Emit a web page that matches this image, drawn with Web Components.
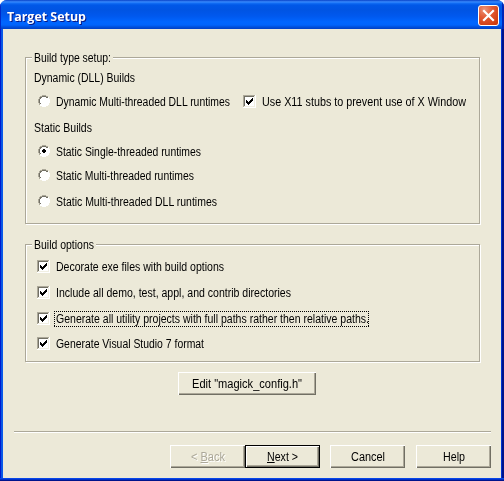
<!DOCTYPE html>
<html lang="en">
<head>
<meta charset="utf-8">
<title>Target Setup</title>
<style>
html,body{margin:0;padding:0;overflow:hidden;background:#fff}
body{font:12px/16px "Liberation Sans",Arial,sans-serif;color:#000}
.panel{display:flex;flex-direction:column;height:449px;box-sizing:border-box;padding:28px 10px 10px 11px}
.panel>xp-group{margin-left:11px}
.type{--rows:23px 27px 23px 24px 26px 16px;height:167px;--pad:12px}
.options{--rows:26px 26px 25px 16px;height:118px;--pad:13px;margin-top:20px}
.line{display:flex}
.line xp-option:first-child{width:206px}
xp-option{margin-left:12px}
.line xp-option+xp-option{margin-left:0}
.edit{margin:10px 0 0 164px}
hr{box-sizing:border-box;height:2px;width:477px;margin:36px 0 12px;border:0;border-top:1px solid #aca899;border-bottom:1px solid #fff;flex:none}
.actions{display:flex;margin-left:156px}
.actions .cancel{margin:0 11px 0 10px}
</style>
</head>
<body>
<xp-window caption="Target Setup">
  <div class="panel">
    <xp-group class="type" caption="Build type setup:" fit="77">
      <fit-text fit="101" style="margin-left:8px">Dynamic (DLL) Builds</fit-text>
      <div class="line">
        <xp-option kind="radio" fit="174">Dynamic Multi-threaded DLL runtimes</xp-option>
        <xp-option kind="check" checked fit="204">Use X11 stubs to prevent use of X Window</xp-option>
      </div>
      <fit-text fit="58" style="margin-left:8px">Static Builds</fit-text>
      <xp-option kind="radio" checked fit="145">Static Single-threaded runtimes</xp-option>
      <xp-option kind="radio" fit="138">Static Multi-threaded runtimes</xp-option>
      <xp-option kind="radio" fit="161">Static Multi-threaded DLL runtimes</xp-option>
    </xp-group>
    <xp-group class="options" caption="Build options" fit="60">
      <xp-option kind="check" checked fit="168">Decorate exe files with build options</xp-option>
      <xp-option kind="check" checked fit="235">Include all demo, test, appl, and contrib directories</xp-option>
      <xp-option kind="check" checked focused fit="313">Generate all utility projects with full paths rather then relative paths.</xp-option>
      <xp-option kind="check" checked fit="148">Generate Visual Studio 7 format</xp-option>
    </xp-group>
    <xp-button class="edit" style="--w:138px" fit="110">Edit "magick_config.h"</xp-button>
    <hr>
    <div class="actions">
      <xp-button disabled fit="34">&lt; <u>B</u>ack</xp-button>
      <xp-button primary fit="31"><u>N</u>ext &gt;</xp-button>
      <xp-button class="cancel" fit="34">Cancel</xp-button>
      <xp-button fit="22">Help</xp-button>
    </div>
  </div>
</xp-window>
<script>
// Text line condensed horizontally to a given pixel width.
class FitText extends HTMLElement{
  constructor(){
    super();
    this.attachShadow({mode:'open'}).innerHTML=`<style>
      :host{display:block;height:16px;white-space:pre}
      span{display:inline-block;transform-origin:0 50%}
    </style><span><slot></slot></span>`;
  }
  connectedCallback(){
    const w=+this.getAttribute('fit'), s=this.shadowRoot.querySelector('span');
    const natural=s.getBoundingClientRect().width;
    if(!w||!natural) return;
    this.style.width=w+'px';
    s.style.transform=`scaleX(${w/natural})`;
  }
}

class XpWindow extends HTMLElement{
  constructor(){
    super();
    this.attachShadow({mode:'open'}).innerHTML=`<style>
      :host{display:block;box-sizing:border-box;width:504px;height:481px;overflow:hidden;
        border-radius:7px 7px 0 0;
        background:linear-gradient(90deg,#0019cf 0,#0019cf 1px,#0855dd 1px,#0a5af0 3px,#0a5af0 501px,#0033d0 501px,#0033d0 502px,#00138c 502px)}
      header{display:flex;align-items:flex-start;justify-content:space-between;box-sizing:border-box;height:29px;padding:5px 5px 0 7px;
        background:linear-gradient(180deg,#0842c8 0,#3a8cff 2px,#1470f5 3px,#0058e8 5px,#0054e3 10px,#0058ee 16px,#0066ff 22px,#0064fc 25px,#0050dc 27px,#0040c4 29px);
        box-shadow:inset 1px 0 #0028c8,inset -2px 0 #0026b8}
      .cap{color:#fff;height:20px;margin-top:1px;font:bold 13px/20px "Open Sans","Noto Sans",sans-serif;text-shadow:1px 1px #0a1883}
      main{width:498px;height:449px;margin-left:3px;background:#ece9d8}
      footer{height:3px;background:linear-gradient(#0846e8 0 1px,#0030c8 1px 2px,#00138c 2px)}
      svg{display:block;flex:none}
    </style>
    <header><fit-text class="cap" fit="79">${this.getAttribute('caption')}</fit-text>
      <svg width="21" height="21" viewBox="0 0 21 21">
        <defs><radialGradient id="g" cx=".3" cy=".2" r="1"><stop offset="0" stop-color="#ec9378"/><stop offset=".4" stop-color="#e25a34"/><stop offset="1" stop-color="#c93406"/></radialGradient></defs>
        <rect x=".5" y=".5" width="20" height="20" rx="2.5" fill="url(#g)" stroke="#fff"/>
        <path d="M6 6L15 15M15 6L6 15" stroke="#fff" stroke-width="2.2" stroke-linecap="square" fill="none"/>
      </svg>
    </header><main><slot></slot></main><footer></footer>`;
  }
}

class XpGroup extends HTMLElement{
  constructor(){
    super();
    this.attachShadow({mode:'open'}).innerHTML=`<style>
      :host{display:block;position:relative;box-sizing:border-box;width:455px;flex:none;border:1px solid #aca899;
        box-shadow:1px 1px #fff,inset 1px 1px #fff}
      .legend{position:absolute;left:6px;top:-8px;padding:0 2px;background:#ece9d8}
      .body{display:grid;grid-template-rows:var(--rows);padding-top:var(--pad)}
    </style><div class="legend"><fit-text fit="${this.getAttribute('fit')}">${this.getAttribute('caption')}</fit-text></div>
    <div class="body"><slot></slot></div>`;
  }
}

const RADIO=`<svg width="12" height="12" viewBox="0 0 12 12" shape-rendering="crispEdges">
  <path d="M4 1h4v1h2v2h1v4h-1v2h-2v1h-4v-1h-2v-2h-1v-4h1v-2h2z" fill="#fff"/>
  <path d="M4 0h4v1h2v1H8V1H4v1H2v2H1v4h1v2H1V8H0V4h1V2h1V1h2z" fill="#aca899"/>
  <path d="M4 1h4v1H4v1H3v1H2v4H1V4h1V2h2zM8 2h2v1H8zM2 8h1v1H2z" fill="#716f64"/>
  <path d="M10 2h1v2h1v4h-1v2h-1v1H8v1H4v-1H2v-1h2v1h4v-1h2V8h1V4h-1z" fill="#fff"/>
  <path class="mark" d="M5 4h2v1h1v2h-1v1h-2v-1h-1v-2h1z" fill="#000"/></svg>`;
const CHECK=`<svg width="13" height="13" viewBox="0 0 13 13" shape-rendering="crispEdges">
  <path d="M0 0h13v13H0z" fill="#fff"/>
  <path d="M0 0h12v1H1v11H0z" fill="#aca899"/>
  <path d="M1 1h10v1H2v9H1z" fill="#716f64"/>
  <path d="M11 1h1v11H1v-1h10z" fill="#f1efe2"/>
  <path class="mark" d="M3 5h1v1h1v1h1v-1h1v-1h1v-1h1v-1h1v3h-1v1h-1v1h-1v1h-1v1h-1v-1h-1v-1h-1z" fill="#000"/></svg>`;

class XpOption extends HTMLElement{
  constructor(){
    super();
    const radio=this.getAttribute('kind')==='radio';
    this.attachShadow({mode:'open'}).innerHTML=`<style>
      :host{display:flex;align-items:flex-start;height:16px;white-space:nowrap;box-sizing:border-box}
      svg{display:block;flex:none;margin:2px ${radio?'5px 0 0':'5px 0 -1px'}}
      :host(:not([checked])) .mark{display:none}
      .label{position:relative;padding:1px 0 0 ${radio?1:0.5}px}
      .focus{position:absolute;left:-1px;top:1px;width:315px;height:16px;
        --h:repeating-linear-gradient(90deg,#000 0 1px,transparent 1px 2px);
        --v:repeating-linear-gradient(180deg,#000 0 1px,transparent 1px 2px);
        background:var(--h) 0 0/100% 1px no-repeat,var(--h) 0 100%/100% 1px no-repeat,var(--v) 0 0/1px 100% no-repeat,var(--v) 100% 0/1px 100% no-repeat}
    </style>${radio?RADIO:CHECK}<div class="label"><fit-text fit="${this.getAttribute('fit')}"><slot></slot></fit-text>
    ${this.hasAttribute('focused')?'<div class="focus"></div>':''}</div>`;
  }
}

class XpButton extends HTMLElement{
  constructor(){
    super();
    this.attachShadow({mode:'open'}).innerHTML=`<style>
      :host{display:flex;justify-content:center;align-items:center;box-sizing:border-box;flex:none;width:var(--w,75px);height:23px;
        box-shadow:inset 1px 1px #fff,inset -1px -1px #716f64,inset -2px -2px #aca899}
      :host([primary]){box-shadow:inset 0 0 0 1px #000,inset 2px 2px #fff,inset -2px -2px #716f64,inset -3px -3px #aca899}
      :host([disabled]){color:#aca899;text-shadow:1px 1px #fff}
    </style><fit-text fit="${this.getAttribute('fit')}"><slot></slot></fit-text>`;
  }
}
customElements.define('fit-text',FitText);
customElements.define('xp-window',XpWindow);
customElements.define('xp-group',XpGroup);
customElements.define('xp-option',XpOption);
customElements.define('xp-button',XpButton);
</script>
</body>
</html>
